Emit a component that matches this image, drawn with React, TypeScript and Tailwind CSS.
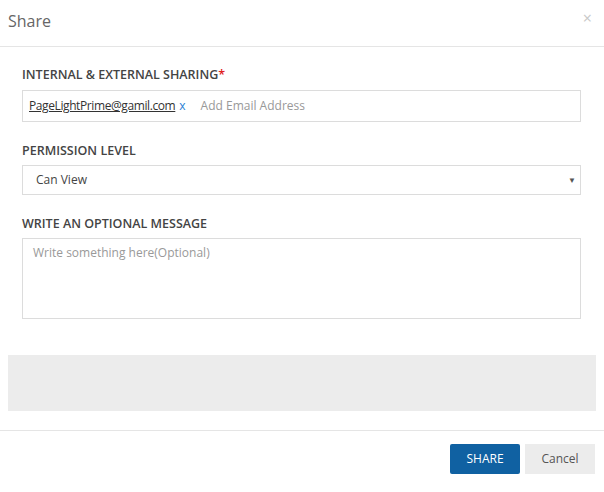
export default function App() {
  return (
    <div className="w-[604px] h-[492px] bg-white flex flex-col font-['Open_Sans',sans-serif] text-[#555]">
      <div className="h-[47px] flex items-center justify-between pl-2 pr-3 border-b border-[#e5e5e5]">
        <h1 className="text-[16px] text-[#666] -mt-[5px]">Share</h1>
        <span className="text-[16px] text-[#c8c8c8] -mt-[10px]">×</span>
      </div>

      <div className="pl-[22px] pr-[23px] pt-[19px] flex flex-col">
        <label className="text-[12.5px] font-semibold text-[#444] leading-[17px]">
          INTERNAL &amp; EXTERNAL SHARING<span className="text-[#e02020]">*</span>
        </label>
        <div className="mt-[7px] h-[32px] border border-[#dcdcdc] flex items-center pl-[6px] text-[12px]">
          <span className="underline text-[#333] tracking-[-0.4px]">PageLightPrime@gamil.com</span>
          <span className="ml-[4px] text-[#2a7fd4]">x</span>
          <span className="ml-[15px] text-[#999]">Add Email Address</span>
        </div>

        <label className="mt-[20px] text-[12.5px] font-semibold text-[#444] leading-[17px]">
          PERMISSION LEVEL
        </label>
        <div className="mt-[6px] h-[30px] border border-[#dcdcdc] flex items-center justify-between pr-[4px] text-[12px] text-[#444]">
          <span className="ml-[13px]">Can View</span>
          <span className="text-[8px] text-[#555]">▼</span>
        </div>

        <label className="mt-[20px] text-[12.5px] font-semibold text-[#444] leading-[17px]">
          WRITE AN OPTIONAL MESSAGE
        </label>
        <div className="mt-[6px] h-[81px] border border-[#dcdcdc] px-[10px] pt-[5px] text-[12px] text-[#999]">
          Write something here(Optional)
        </div>
      </div>

      <div className="mx-2 mt-[36px] h-[56px] bg-[#ececec]" />

      <div className="mt-[19px] border-t border-[#e5e5e5] flex justify-end gap-[5px] pr-[9px] pt-[13px]">
        <button className="w-[70px] h-[30px] bg-[#1061a2] text-white text-[12px] rounded-[2px]">SHARE</button>
        <button className="w-[70px] h-[30px] bg-[#ececec] text-[#555] text-[12px]">Cancel</button>
      </div>
    </div>
  );
}
